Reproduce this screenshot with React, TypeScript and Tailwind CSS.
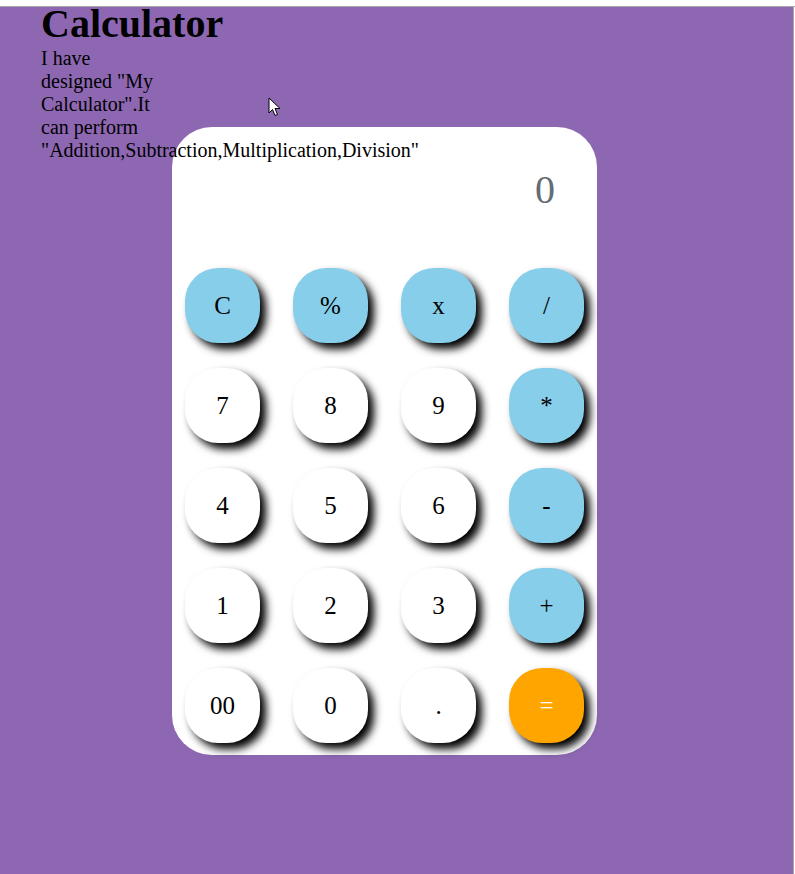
const KEYS: { label: string; kind: 'op' | 'num' | 'eq' }[] = [
  { label: 'C', kind: 'op' },
  { label: '%', kind: 'op' },
  { label: 'x', kind: 'op' },
  { label: '/', kind: 'op' },
  { label: '7', kind: 'num' },
  { label: '8', kind: 'num' },
  { label: '9', kind: 'num' },
  { label: '*', kind: 'op' },
  { label: '4', kind: 'num' },
  { label: '5', kind: 'num' },
  { label: '6', kind: 'num' },
  { label: '-', kind: 'op' },
  { label: '1', kind: 'num' },
  { label: '2', kind: 'num' },
  { label: '3', kind: 'num' },
  { label: '+', kind: 'op' },
  { label: '00', kind: 'num' },
  { label: '0', kind: 'num' },
  { label: '.', kind: 'num' },
  { label: '=', kind: 'eq' },
];

const KEY_BG: Record<'op' | 'num' | 'eq', string> = {
  op: 'bg-[#87ceeb] text-black',
  num: 'bg-white text-black',
  eq: 'bg-[#ffa500] text-white',
};

function Cursor() {
  return (
    <svg
      className="absolute left-[268px] top-[90px]"
      width="14"
      height="20"
      viewBox="0 0 14 20"
    >
      <path
        d="M1 1 L1 16 L4.5 12.5 L7 18.5 L9.5 17.5 L7 11.5 L12 11.5 Z"
        fill="#fff"
        stroke="#000"
        strokeWidth="1"
        strokeLinejoin="round"
      />
    </svg>
  );
}

export default function App() {
  return (
    <div className="flex h-[874px] w-[795px] flex-col bg-white font-['Liberation_Serif',serif]">
      <div className="h-[7px] border-b border-[#a8a8a8]" />
      <div className="relative mr-px flex-1 border-r border-[#a8a8a8] bg-[#8e67b3]">
        <div className="-mt-[6px] pl-[41px] text-black">
          <h1 className="text-[40px] font-bold leading-[46px]">Calculator</h1>
          <p className="w-[118px] text-[20px] leading-[23px]">
            I have designed "My Calculator".It can perform "Addition,Subtraction,Multiplication,Division"
          </p>
        </div>
        <div className="-mt-[35px] ml-[172px] h-[628px] w-[425px] rounded-[40px] bg-white px-[13px] pb-[12px]">
          <div className="h-[141px] pr-[29px] pt-[40px] text-right text-[40px] leading-[46px] text-[#646c74]">
            0
          </div>
          <div className="grid grid-cols-[repeat(4,75px)] gap-x-[33px] gap-y-[25px]">
            {KEYS.map((k) => (
              <button
                key={k.label}
                className={`flex h-[75px] w-[75px] items-center justify-center rounded-[33px] text-[25px] leading-none shadow-[6px_6px_8px_#000] ${KEY_BG[k.kind]}`}
              >
                {k.label}
              </button>
            ))}
          </div>
        </div>
        <Cursor />
      </div>
    </div>
  );
}
